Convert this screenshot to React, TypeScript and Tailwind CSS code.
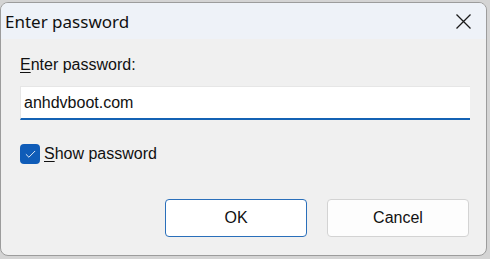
import { Check } from "lucide-react";

export default function App() {
  return (
    <div className="w-[490px] h-[259px] bg-[#d4d4d4] pt-[2px] overflow-hidden">
      <div className="w-[487px] h-[254px] rounded-[8px] border border-[#9c9c9c] bg-[#f0f0f0] overflow-hidden flex flex-col">
        {/* Title bar */}
        <div className="h-[36px] bg-[#eef2f8] flex items-center justify-between pl-[4px] pr-[15px]">
          <span className="text-[17px] text-[#111] font-['Noto_Sans',sans-serif] leading-none">
            Enter password
          </span>
          <svg width="15" height="15" viewBox="0 0 15 15" className="text-[#1a1a1a]">
            <path d="M0.5 0.5 L14.5 14.5 M14.5 0.5 L0.5 14.5" stroke="currentColor" strokeWidth="1.3" />
          </svg>
        </div>

        {/* Body */}
        <div className="flex flex-col pl-[19px] pr-[17px] pt-[18px] font-['Liberation_Sans',Arial,sans-serif] text-[16px] text-[#111]">
          <label className="leading-none">
            <span className="underline underline-offset-[2px]">E</span>nter password:
          </label>
          <div className="mt-[13px] h-[34px] w-[450px] bg-white border-l border-t border-[#e6e6e6] border-b-2 border-b-[#1462b4] flex items-center pl-[3px]">
            anhdvboot.com
          </div>
          <div className="mt-[22px] flex items-center gap-[4px]">
            <div className="w-[20px] h-[20px] rounded-[4px] bg-[#0f5cb8] flex items-center justify-center">
              <Check className="w-[13px] h-[13px] text-white" strokeWidth={1.6} />
            </div>
            <span>
              <span className="underline underline-offset-[2px]">S</span>how password
            </span>
          </div>
          <div className="mt-[33px] flex justify-end gap-[20px]">
            <button className="w-[142px] h-[38px] rounded-[4px] bg-white border border-[#2a6fba] text-[16px]">
              OK
            </button>
            <button className="w-[142px] h-[38px] rounded-[4px] bg-[#fdfdfd] border border-[#d3d3d3] text-[16px]">
              Cancel
            </button>
          </div>
        </div>
      </div>
    </div>
  );
}
